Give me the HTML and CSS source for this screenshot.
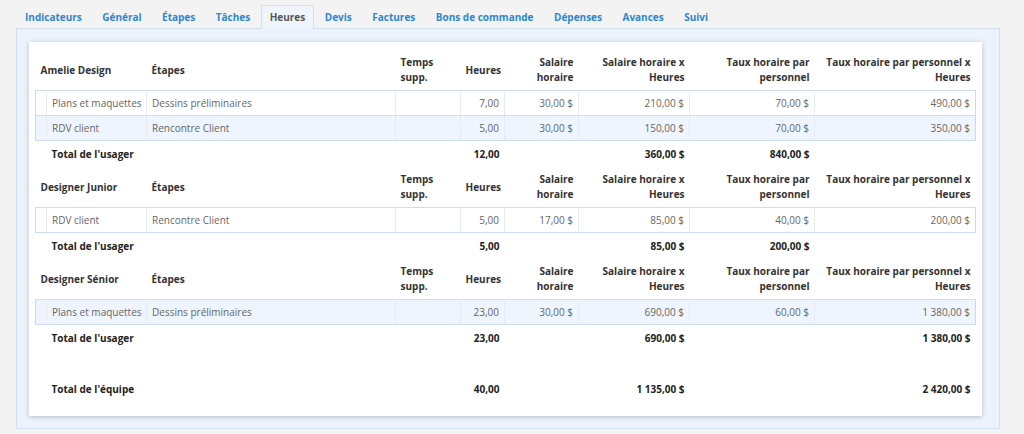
FILE: index.html
```html
<!DOCTYPE html>
<html lang="fr">
<head>
<meta charset="utf-8">
<title>Heures</title>
<link rel="stylesheet" href="styles.css">
</head>
<body>
<nav class="tabs">
  <a class="tab">Indicateurs</a>
  <a class="tab">Général</a>
  <a class="tab">Étapes</a>
  <a class="tab">Tâches</a>
  <a class="tab active">Heures</a>
  <a class="tab">Devis</a>
  <a class="tab">Factures</a>
  <a class="tab">Bons de commande</a>
  <a class="tab">Dépenses</a>
  <a class="tab">Avances</a>
  <a class="tab">Suivi</a>
</nav>
<section class="panel">
  <div class="card">
    <table class="hours">
      <colgroup>
        <col class="c1"><col class="c2"><col class="c3"><col class="c4"><col class="c5">
        <col class="c6"><col class="c7"><col class="c8"><col class="c9">
      </colgroup>
      <tbody>
        <tr class="head">
          <th colspan="2" class="left">Amelie Design</th><th class="left">Étapes</th><th class="left">Temps<br>supp.</th><th>Heures</th><th>Salaire<br>horaire</th><th>Salaire horaire x<br>Heures</th><th>Taux horaire par<br>personnel</th><th>Taux horaire par personnel x<br>Heures</th>
        </tr>
        <tr class="row">
          <td></td><td>Plans et maquettes</td><td>Dessins préliminaires</td><td></td><td class="num">7,00</td><td class="num">30,00 $</td><td class="num">210,00 $</td><td class="num">70,00 $</td><td class="num">490,00 $</td>
        </tr>
        <tr class="row alt">
          <td></td><td>RDV client</td><td>Rencontre Client</td><td></td><td class="num">5,00</td><td class="num">30,00 $</td><td class="num">150,00 $</td><td class="num">70,00 $</td><td class="num">350,00 $</td>
        </tr>
        <tr class="total">
          <td></td><td colspan="2">Total de l'usager</td><td></td><td class="num">12,00</td><td></td><td class="num">360,00 $</td><td class="num">840,00 $</td><td></td>
        </tr>

        <tr class="head">
          <th colspan="2" class="left">Designer Junior</th><th class="left">Étapes</th><th class="left">Temps<br>supp.</th><th>Heures</th><th>Salaire<br>horaire</th><th>Salaire horaire x<br>Heures</th><th>Taux horaire par<br>personnel</th><th>Taux horaire par personnel x<br>Heures</th>
        </tr>
        <tr class="row">
          <td></td><td>RDV client</td><td>Rencontre Client</td><td></td><td class="num">5,00</td><td class="num">17,00 $</td><td class="num">85,00 $</td><td class="num">40,00 $</td><td class="num">200,00 $</td>
        </tr>
        <tr class="total">
          <td></td><td colspan="2">Total de l'usager</td><td></td><td class="num">5,00</td><td></td><td class="num">85,00 $</td><td class="num">200,00 $</td><td></td>
        </tr>

        <tr class="head">
          <th colspan="2" class="left">Designer Sénior</th><th class="left">Étapes</th><th class="left">Temps<br>supp.</th><th>Heures</th><th>Salaire<br>horaire</th><th>Salaire horaire x<br>Heures</th><th>Taux horaire par<br>personnel</th><th>Taux horaire par personnel x<br>Heures</th>
        </tr>
        <tr class="row alt">
          <td></td><td>Plans et maquettes</td><td>Dessins préliminaires</td><td></td><td class="num">23,00</td><td class="num">30,00 $</td><td class="num">690,00 $</td><td class="num">60,00 $</td><td class="num">1 380,00 $</td>
        </tr>
        <tr class="total">
          <td></td><td colspan="2">Total de l'usager</td><td></td><td class="num">23,00</td><td></td><td class="num">690,00 $</td><td></td><td class="num">1 380,00 $</td>
        </tr>

        <tr class="total grand">
          <td></td><td colspan="2">Total de l'équipe</td><td></td><td class="num">40,00</td><td></td><td class="num">1 135,00 $</td><td></td><td class="num">2 420,00 $</td>
        </tr>
      </tbody>
    </table>
  </div>
</section>
</body>
</html>
```
FILE: styles.css
```css
* { box-sizing: border-box; }
html, body { margin: 0; }
body {
  background: #f3f3f3;
  font-family: "Open Sans", "DejaVu Sans", sans-serif;
  font-size: 10px;
  color: #333;
  height: 434px;
  overflow: hidden;
}

.tabs {
  display: flex;
  height: 28px;
  padding: 5px 0 0 15px;
}
.tab {
  display: flex;
  align-items: center;
  height: 23px;
  padding: 0 9px 1px;
  margin-right: 0.5px;
  border: 1px solid transparent;
  border-bottom: none;
  font-weight: 700;
  color: #2f87d0;
  text-decoration: none;
  cursor: pointer;
}
.tab.active {
  height: 24px;
  margin-bottom: -1px;
  padding: 0 8px 1px;
  background: #f0f5fd;
  border-color: #d3e0f4;
  color: #555;
  position: relative;
  z-index: 1;
}

.panel {
  margin-left: 16px;
  width: 984px;
  height: 401px;
  background: #edf3fc;
  border: 1px solid #d3e0f4;
  padding: 13px 17px 12px 12px;
}

.card {
  background: #fff;
  height: 374px;
  padding: 8px 7px 15px 6px;
  box-shadow: 0 1px 5px rgba(0, 0, 0, 0.22);
}

.hours {
  width: 940px;
  table-layout: fixed;
  border-collapse: collapse;
}
.c1 { width: 11px; }
.c2 { width: 100px; }
.c3 { width: 249px; }
.c4 { width: 65px; }
.c5 { width: 44px; }
.c6 { width: 74px; }
.c7 { width: 111px; }
.c8 { width: 125px; }
.c9 { width: 161px; }

.hours th {
  padding: 5px 5px 5px 5px;
  line-height: 15px;
  font-weight: 700;
  color: #333;
  text-align: right;
  vertical-align: middle;
  white-space: nowrap;
}
.hours th.left { text-align: left; }

.row td {
  padding: 4px 5px 4px 5px;
  line-height: 16px;
  color: #666;
  border-top: 1px solid #cfdcf3;
  border-bottom: 1px solid #cfdcf3;
  border-left: 1px solid #e7eaef;
  border-right: 1px solid #e7eaef;
  white-space: nowrap;
}
.row td:first-child { border-left-color: #c9d8f2; }
.row td:last-child { border-right-color: #c9d8f2; }
.row.alt td { background: #eef5fe; }

.total td {
  padding: 5px 5px 5px 5px;
  line-height: 16px;
  font-weight: 700;
  color: #222;
  white-space: nowrap;
}
.total.grand td { padding-top: 30px; }

.num { text-align: right; }
```
